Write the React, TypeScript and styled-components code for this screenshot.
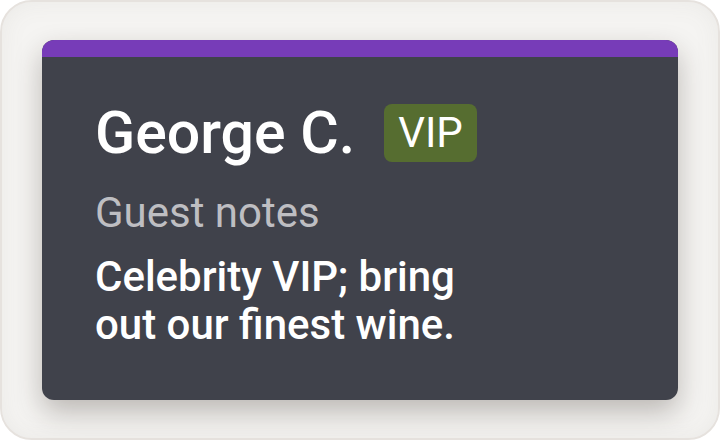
import React from "react";
import styled, { createGlobalStyle } from "styled-components";

const Global = createGlobalStyle`
  html, body { margin: 0; padding: 0; background: #ffffff; }
  body { font-family: Roboto, "Liberation Sans", sans-serif; }
`;

const Frame = styled.div`
  box-sizing: border-box;
  width: 720px;
  height: 440px;
  border: 2px solid #e6e2de;
  border-radius: 32px;
  background: #f5f4f2;
  box-shadow: inset 0 0 24px rgba(120, 110, 100, 0.08);
  padding: 38px 40px;
`;

const Card = styled.div`
  box-sizing: border-box;
  height: 360px;
  border-radius: 12px;
  overflow: hidden;
  background: #40424b;
  box-shadow: 0 12px 28px rgba(40, 30, 20, 0.28);
  display: flex;
  flex-direction: column;
`;

const Accent = styled.div`
  height: 17px;
  background: #773cb8;
  flex: none;
`;

const Body = styled.div`
  padding: 45px 53px 0;
  display: flex;
  flex-direction: column;
`;

const TitleRow = styled.div`
  display: flex;
  align-items: center;
  gap: 29px;
`;

const Name = styled.h1`
  margin: 0;
  font-size: 59px;
  font-weight: 500;
  line-height: 62px;
  color: #ffffff;
`;

const Badge = styled.span`
  background: #566d30;
  color: #ffffff;
  border-radius: 8px;
  font-size: 42px;
  font-weight: 400;
  line-height: 58px;
  padding: 0 14px;
`;

const Label = styled.div`
  margin-top: 25px;
  font-size: 42px;
  line-height: 48px;
  color: #bebec2;
`;

const Note = styled.p`
  margin: 16px 0 0;
  font-size: 42px;
  font-weight: 500;
  line-height: 48px;
  color: #ffffff;
  max-width: 400px;
`;

export default function App() {
  return (
    <>
      <Global />
      <Frame>
        <Card>
          <Accent />
          <Body>
            <TitleRow>
              <Name>George C.</Name>
              <Badge>VIP</Badge>
            </TitleRow>
            <Label>Guest notes</Label>
            <Note>Celebrity VIP; bring out our finest wine.</Note>
          </Body>
        </Card>
      </Frame>
    </>
  );
}
